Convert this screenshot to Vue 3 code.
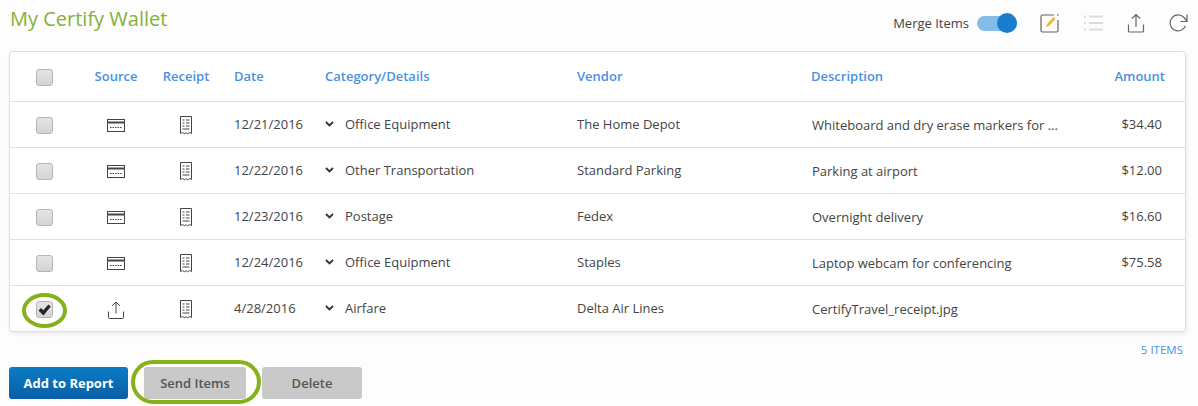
<template>
  <div class="wallet">
    <header class="top">
      <h1 class="title">My Certify Wallet</h1>
      <div class="tools">
        <span class="merge-label">Merge Items</span>
        <span class="switch"><span class="knob"></span></span>
        <svg class="tool tool--edit" width="20" height="20" viewBox="0 0 20 20" fill="none">
          <path d="M14 2H2.500A1.500 1.500 0 0 0 1 3.500v14A1.500 1.500 0 0 0 2.500 19h14a1.500 1.500 0 0 0 1.500-1.500V7" stroke="#666" stroke-width="1.200" />
          <path d="M6 14l1-3 6.500-7 2 2-6.500 7z" fill="#f2b632" />
          <circle cx="17.800" cy="2" r="1" fill="#e8778a" />
        </svg>
        <svg class="tool tool--list" width="20" height="20" viewBox="0 0 20 20" fill="none" stroke="#dcdcdc" stroke-width="2">
          <path d="M1 3.500h2M6 3.500h14M1 10h2M6 10h14M1 16.500h2M6 16.500h14" />
        </svg>
        <svg class="tool tool--upload" width="18" height="20" viewBox="0 0 18 20" fill="none" stroke="#666" stroke-width="1.200">
          <path d="M9 14V1.500M5 5.500l4-4 4 4M1.500 11.500v6.500a1 1 0 0 0 1 1h13a1 1 0 0 0 1-1v-6.500" />
        </svg>
        <svg class="tool tool--refresh" width="20" height="20" viewBox="0 0 20 20" fill="none" stroke="#666" stroke-width="1.200">
          <path d="M17.500 13A8 8 0 1 1 16 4.500l2.500 3M19 1.500v7h-6.500" />
        </svg>
      </div>
    </header>

    <section class="card">
      <div class="row row--head">
        <span class="cell cell--center"><span class="box"></span></span>
        <span class="cell cell--center cell--label">Source</span>
        <span class="cell cell--center cell--label">Receipt</span>
        <span class="cell cell--text">Date</span>
        <span class="cell cell--text">Category/Details</span>
        <span class="cell cell--text">Vendor</span>
        <span class="cell cell--text">Description</span>
        <span class="cell cell--amount">Amount</span>
      </div>
      <div class="row" v-for="item in items" :key="item.date">
        <span class="cell cell--center">
          <span class="box" :class="{ 'box--checked': item.checked }">
            <svg v-if="item.checked" width="13" height="12" viewBox="0 0 13 12">
              <path d="M0.500 6.500l2.500-2.500 2.300 2.300L10.300 0.500 12.800 2.600 5.400 11.500z" fill="#262626" />
            </svg>
          </span>
          <span v-if="item.checked" class="ring ring--box"></span>
        </span>
        <span class="cell cell--center">
          <svg v-if="item.source === 'card'" width="18" height="13" viewBox="0 0 18 13" fill="none" stroke="#444">
            <rect x="0.500" y="0.500" width="17" height="12" />
            <path d="M1 3.500h16" stroke-width="2" />
            <path d="M3 8.500h12" stroke-dasharray="1.500 1" />
          </svg>
          <svg v-else width="16" height="18" viewBox="0 0 16 18" fill="none" stroke="#444">
            <path d="M8 12.500V1M4 5l4-4 4 4M0.500 10.500v6a1 1 0 0 0 1 1h13a1 1 0 0 0 1-1v-6" />
          </svg>
        </span>
        <span class="cell cell--center">
          <svg width="12" height="19" viewBox="0 0 12 19" fill="none" stroke="#444">
            <path d="M0.500 17.500V0.500h11v17l-2-1-2 1.500-1.500-1.500-1.500 1.500-2-1.500z" />
            <path d="M2.500 4h2M6 4h3.500M2.500 7h2M6 7h3.500M2.500 10h2M6 10h3.500M2.500 13h7" />
          </svg>
        </span>
        <span class="cell cell--text">{{ item.date }}</span>
        <span class="cell cell--text cell--category">
          <svg class="chevron" width="9" height="6" viewBox="0 0 9 6" fill="none" stroke="#333" stroke-width="1.800">
            <path d="M1 1l3.500 3.500L8 1" />
          </svg>
          {{ item.category }}
        </span>
        <span class="cell cell--text">{{ item.vendor }}</span>
        <span class="cell cell--text cell--desc">{{ item.description }}</span>
        <span class="cell cell--amount">{{ item.amount }}</span>
      </div>
    </section>

    <div class="count">5 ITEMS</div>

    <div class="actions">
      <button class="btn btn--primary">Add to Report</button>
      <button class="btn btn--send">
        Send Items
        <span class="ring ring--send"></span>
      </button>
      <button class="btn btn--delete">Delete</button>
    </div>
  </div>
</template>

<script setup>
const items = [
  { date: '12/21/2016', source: 'card', category: 'Office Equipment', vendor: 'The Home Depot', description: 'Whiteboard and dry erase markers for ...', amount: '$34.40' },
  { date: '12/22/2016', source: 'card', category: 'Other Transportation', vendor: 'Standard Parking', description: 'Parking at airport', amount: '$12.00' },
  { date: '12/23/2016', source: 'card', category: 'Postage', vendor: 'Fedex', description: 'Overnight delivery', amount: '$16.60' },
  { date: '12/24/2016', source: 'card', category: 'Office Equipment', vendor: 'Staples', description: 'Laptop webcam for conferencing', amount: '$75.58' },
  { date: '4/28/2016', source: 'upload', category: 'Airfare', vendor: 'Delta Air Lines', description: 'CertifyTravel_receipt.jpg', amount: '', checked: true },
]
</script>

<style>
body {
  background: #fdfdfd;
}
</style>

<style scoped>
.wallet {
  width: 1198px;
  height: 406px;
  box-sizing: border-box;
  padding: 0 10px 0 9px;
  overflow: hidden;
  font-family: 'Open Sans', 'Liberation Sans', sans-serif;
  font-size: 13px;
  color: #444;
}

/* ── Top bar ── */
.top {
  display: flex;
  align-items: center;
  justify-content: space-between;
  height: 51px;
  padding-bottom: 14px;
  box-sizing: border-box;
}
.title {
  margin: 0 0 0 1px;
  font-size: 20px;
  font-weight: 400;
  color: #85b13a;
}
.tools {
  display: flex;
  align-items: center;
  padding-top: 9px;
}
.merge-label {
  margin-right: 8px;
}
.switch {
  position: relative;
  display: block;
  width: 40px;
  height: 15px;
  border-radius: 8px;
  background: #85bce8;
}
.knob {
  position: absolute;
  top: -3px;
  right: 0;
  width: 20px;
  height: 20px;
  border-radius: 50%;
  background: #1a7dcc;
}
.tool--edit { margin-left: 23px; }
.tool--list { margin-left: 23px; }
.tool--upload { margin-left: 24px; }
.tool--refresh { margin-left: 23px; }

/* ── Table card ── */
.card {
  width: 1177px;
  box-sizing: border-box;
  background: #fff;
  border: 1px solid #dedede;
  border-radius: 4px;
  box-shadow: 1px 2px 4px rgba(0, 0, 0, 0.08);
}
.row {
  display: grid;
  grid-template-columns: 69px 74px 66px 91px 252px 234px 279px 110px;
  height: 46px;
  padding-top: 2px;
  align-items: center;
  border-top: 1px solid #e0e0e0;
  box-sizing: border-box;
}
.row--head {
  height: 49px;
  border-top: 0;
  font-weight: 600;
  color: #4a90e2;
}
.cell {
  display: flex;
  align-items: center;
  white-space: nowrap;
}
.cell--center {
  position: relative;
  justify-content: center;
}
/* labels sit a little above the icons in the same row */
.cell--text,
.cell--amount,
.cell--label {
  margin-bottom: 4px;
}
.cell--text {
  padding-left: 15px;
}
.cell--desc {
  margin-bottom: 2px;
  padding-left: 16px;
}
.cell--amount {
  justify-content: flex-end;
  padding-right: 23px;
}
.row--head .cell--amount {
  padding-right: 20px;
}
.chevron {
  margin-right: 11px;
}

.box {
  display: flex;
  align-items: center;
  justify-content: center;
  width: 17px;
  height: 17px;
  box-sizing: border-box;
  border: 1px solid #b5b5b5;
  border-radius: 3px;
  background: linear-gradient(#e4e4e4, #d4d4d4);
}

/* ── Green call-out rings ── */
.ring {
  position: absolute;
  box-sizing: border-box;
  border: 4px solid #85b21a;
  border-radius: 50%;
  pointer-events: none;
}
.ring--box {
  left: 12px;
  top: -8px;
  width: 45px;
  height: 35px;
}
.ring--send {
  left: -13px;
  top: -7px;
  width: 130px;
  height: 44px;
  border-radius: 24px;
}

/* ── Footer ── */
.count {
  height: 35px;
  padding: 10px 5px 0 0;
  box-sizing: border-box;
  text-align: right;
  font-size: 11.500px;
  color: #4a90e2;
}
.actions {
  display: flex;
  gap: 16px;
}
.btn {
  position: relative;
  height: 32px;
  border: 0;
  border-radius: 3px;
  font-family: inherit;
  font-size: 13px;
  font-weight: 600;
  color: #555;
  background: #c9c9c9;
}
.btn--primary {
  width: 119px;
  font-weight: 700;
  color: #fff;
  background: linear-gradient(#0b7cc4, #0a5ea6);
}
.btn--send {
  width: 102px;
}
.btn--delete {
  width: 100px;
}
</style>
